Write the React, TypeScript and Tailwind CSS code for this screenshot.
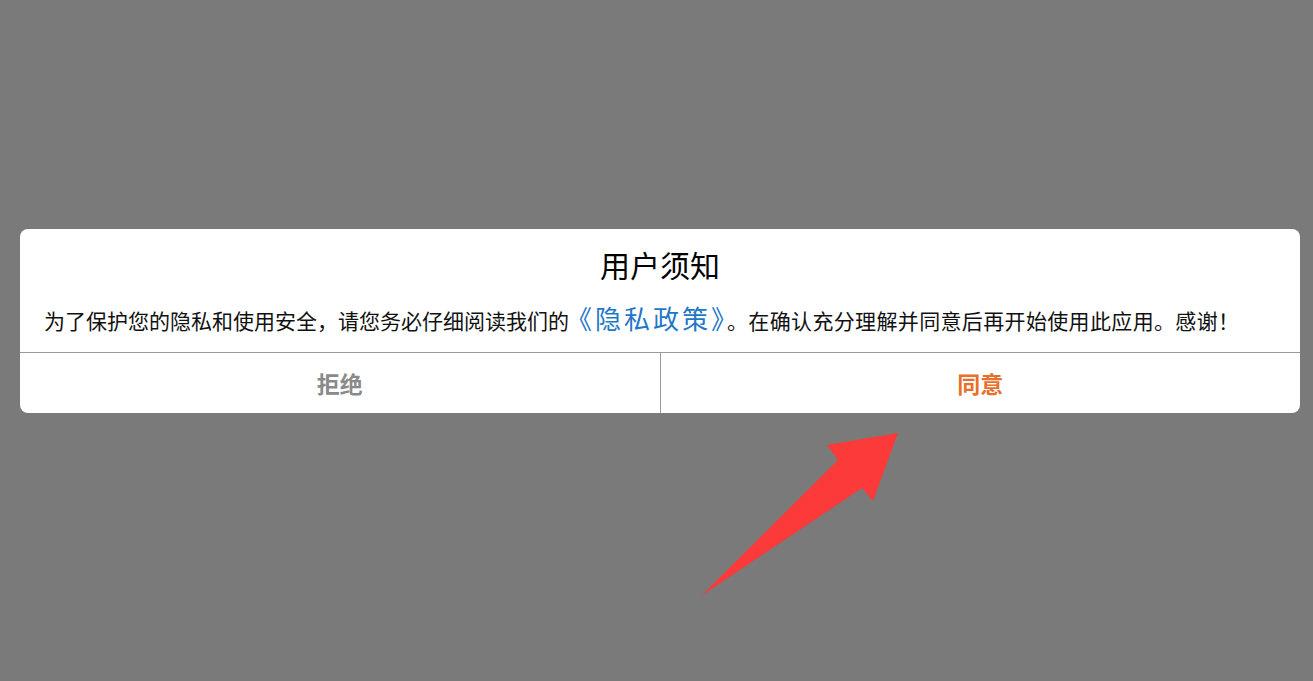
import React from 'react';

const font = { fontFamily: '"Noto Sans CJK SC", "Noto Sans", sans-serif' };

export default function App() {
  return (
    <div className="relative w-full h-[681px] bg-[#7a7a7a] overflow-hidden" style={font}>
      <div className="pl-[20px] pr-[13px] pt-[229px]">
        {/* Dialog */}
        <div className="bg-white rounded-[8px] overflow-hidden">
          <div className="pt-[14px] pb-[15px]">
            <h1 className="text-center text-[30px] leading-[42px] text-black">用户须知</h1>
            <p className="mt-[16px] pl-[24px] text-[21px] leading-[34px] text-[#111] whitespace-nowrap">
              为了保护您的隐私和使用安全，请您务必仔细阅读我们的
              <span className="text-[26px] text-[#1f77c8] tracking-[3px] ml-[-3px]">《隐私政策》</span>
              <span className="tracking-[0.35px]">。在确认充分理解并同意后再开始使用此应用。感谢！</span>
            </p>
          </div>
          <div className="flex border-t border-[#9a9a9a] h-[61px]">
            <button className="flex-1 flex items-center justify-center text-[23px] font-bold text-[#8a8a8a]">
              拒绝
            </button>
            <div className="w-px bg-[#9a9a9a]" />
            <button className="flex-1 flex items-center justify-center text-[23px] font-bold text-[#e8702a]">
              同意
            </button>
          </div>
        </div>
      </div>

      {/* Pointer arrow */}
      <svg className="absolute left-0 top-0 pointer-events-none" width="1313" height="681">
        <polygon
          points="898,433 827,445 838,460 701,596 862,488 873,501"
          fill="#fd3a3a"
        />
      </svg>
    </div>
  );
}
